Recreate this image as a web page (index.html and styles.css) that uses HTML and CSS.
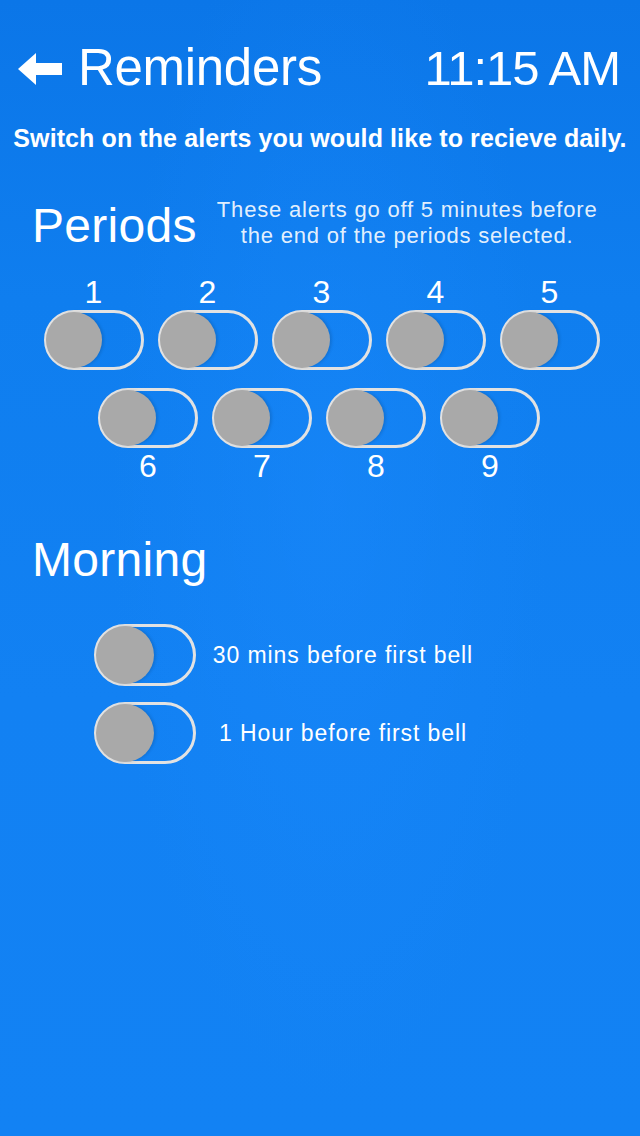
FILE: index.html
```html
<!DOCTYPE html>
<html>
<head>
<meta charset="utf-8">
<link rel="stylesheet" href="styles.css">
</head>
<body>
<div class="screen">
  <header class="header">
    <div class="back">
      <svg class="arrow" width="44" height="34" viewBox="0 0 44 34"><path d="M0 17 L18 1 L18 11 L44 11 L44 23 L18 23 L18 33 Z" fill="#fff"/></svg>
      <span class="title">Reminders</span>
    </div>
    <span class="time">11:15 AM</span>
  </header>
  <p class="subtitle">Switch on the alerts you would like to recieve daily.</p>

  <section class="periods">
    <div class="section-head">
      <h2 class="section-title">Periods</h2>
      <p class="note">These alerts go off 5 minutes before<br>the end of the periods selected.</p>
    </div>
    <div class="row row1">
      <div class="item"><span class="num">1</span><div class="toggle"><div class="knob"></div></div></div>
      <div class="item"><span class="num">2</span><div class="toggle"><div class="knob"></div></div></div>
      <div class="item"><span class="num">3</span><div class="toggle"><div class="knob"></div></div></div>
      <div class="item"><span class="num">4</span><div class="toggle"><div class="knob"></div></div></div>
      <div class="item"><span class="num">5</span><div class="toggle"><div class="knob"></div></div></div>
    </div>
    <div class="row row2">
      <div class="item"><div class="toggle"><div class="knob"></div></div><span class="num">6</span></div>
      <div class="item"><div class="toggle"><div class="knob"></div></div><span class="num">7</span></div>
      <div class="item"><div class="toggle"><div class="knob"></div></div><span class="num">8</span></div>
      <div class="item"><div class="toggle"><div class="knob"></div></div><span class="num">9</span></div>
    </div>
  </section>

  <section class="morning">
    <h2 class="section-title">Morning</h2>
    <div class="morning-list">
      <div class="mrow"><div class="toggle"><div class="knob"></div></div><span class="mlabel">30 mins before first bell</span></div>
      <div class="mrow"><div class="toggle"><div class="knob"></div></div><span class="mlabel">1 Hour before first bell</span></div>
    </div>
  </section>
</div>
</body>
</html>
```
FILE: styles.css
```css
* { box-sizing: border-box; }
html, body { margin: 0; padding: 0; }
body {
  width: 640px;
  height: 1136px;
  overflow: hidden;
  font-family: "Liberation Sans", Arial, sans-serif;
  color: #fff;
  background:
    radial-gradient(ellipse 220px 600px at 330px 500px, rgba(30,140,255,0.35), rgba(30,140,255,0) 100%),
    linear-gradient(180deg, #0b76e8 0px, #0f7eef 300px, #1281f3 700px, #1282f4 1136px);
}
.screen { display: flex; flex-direction: column; }

.header {
  display: flex;
  justify-content: space-between;
  align-items: center;
  padding: 38px 20px 0 18px;
  height: 98px;
}
.back { display: flex; align-items: center; gap: 16px; }
.arrow { display: block; margin-top: 2px; }
.title { font-size: 51px; line-height: 60px; letter-spacing: -0.3px; }
.time { font-size: 49px; line-height: 60px; letter-spacing: -1px; }

.subtitle {
  margin: 26px 0 0;
  text-align: center;
  font-weight: bold;
  font-size: 25px;
  line-height: 28px;
  letter-spacing: 0.1px;
}

.periods { margin-top: 40px; }
.section-head { display: flex; align-items: center; padding-left: 32px; gap: 20px; }
.section-title { margin: 0; font-weight: normal; font-size: 48px; line-height: 56px; letter-spacing: 0.3px; }
.periods .section-title { margin-top: 6px; }
.note {
  margin: 0;
  text-align: center;
  font-size: 22px;
  line-height: 26px;
  letter-spacing: 0.8px;
  color: rgba(255,255,255,0.9);
}

.row { display: flex; justify-content: center; gap: 14px; }
.row1 { margin-top: 20px; padding-left: 3px; }
.row2 { margin-top: 18px; padding-right: 2px; }
.item { display: flex; flex-direction: column; align-items: center; width: 100px; }
.num { font-size: 32px; line-height: 36px; }

.toggle {
  width: 100px;
  height: 60px;
  border: 3px solid #e2e2e2;
  border-radius: 30px;
  display: flex;
  align-items: center;
  flex: none;
}
.knob {
  width: 56px;
  height: 56px;
  margin-left: -1px;
  border-radius: 50%;
  background: #a9a9a9;
  box-shadow: 2px 0 3px rgba(0,0,0,0.12);
}

.morning { margin-top: 48px; padding-left: 32px; }
.morning-list { display: flex; flex-direction: column; gap: 16px; margin-top: 36px; padding-left: 62px; }
.mrow { display: flex; align-items: center; }
.mrow .toggle { width: 102px; height: 62px; border-radius: 31px; }
.mrow .knob { width: 58px; height: 58px; }
.mlabel { width: 294px; text-align: center; font-size: 23px; line-height: 26px; letter-spacing: 0.9px; }
```
